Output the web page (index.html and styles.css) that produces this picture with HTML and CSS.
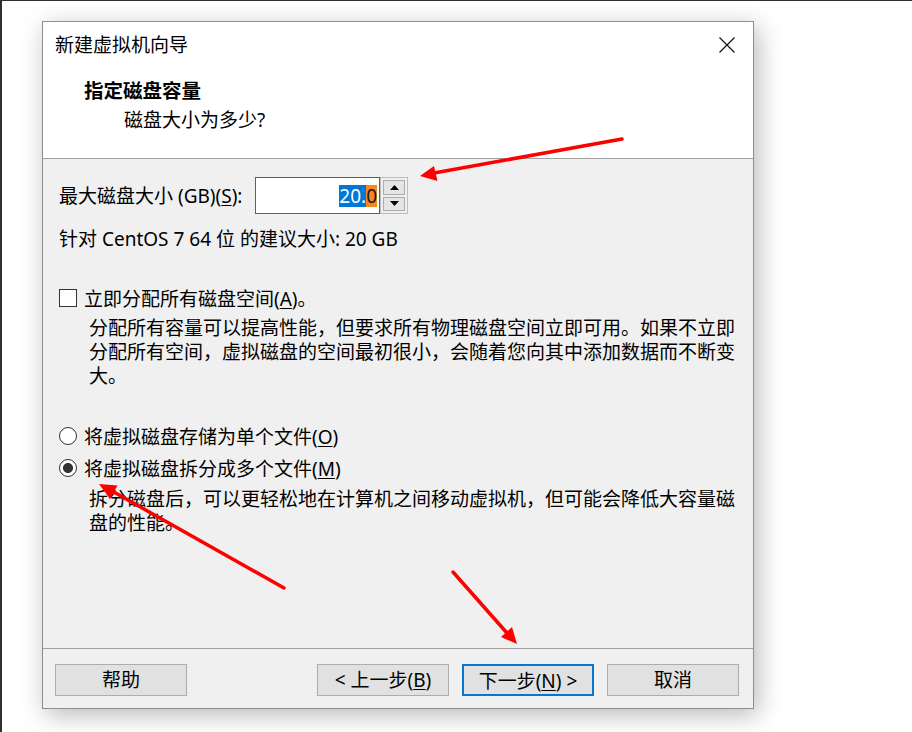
FILE: index.html
```html
<!DOCTYPE html>
<html lang="zh-CN">
<head>
<meta charset="utf-8">
<title>新建虚拟机向导</title>
<link rel="stylesheet" href="styles.css">
</head>
<body>
<div class="screen">
  <div class="dialog">
    <div class="dlg-head">
      <div class="title-row">
        <span class="title">新建虚拟机向导</span>
        <svg class="close" width="16" height="16" viewBox="0 0 16 16" aria-label="关闭"><path d="M0.5 0.5 L15.5 15.5 M15.5 0.5 L0.5 15.5" stroke="#111" stroke-width="1.2" fill="none"/></svg>
      </div>
      <div class="step-title">指定磁盘容量</div>
      <div class="step-sub">磁盘大小为多少?</div>
    </div>
    <div class="dlg-body">
      <div class="size-row">
        <span class="size-label">最大磁盘大小 (GB)(<u>S</u>):</span>
        <div class="spin">
          <div class="spin-input"><span class="sel">20.</span><span class="sel-end">0</span></div>
          <div class="spin-btns">
            <div class="spin-btn"><svg width="9" height="5" viewBox="0 0 9 5"><path d="M0 5 L4.5 0 L9 5 Z" fill="#000"/></svg></div>
            <div class="spin-btn"><svg width="9" height="5" viewBox="0 0 9 5"><path d="M0 0 L4.5 5 L9 0 Z" fill="#000"/></svg></div>
          </div>
        </div>
      </div>
      <div class="hint">针对 CentOS 7 64 位 的建议大小: 20 GB</div>
      <div class="check-row"><span class="checkbox"></span><span>立即分配所有磁盘空间(<u>A</u>)。</span></div>
      <p class="desc">分配所有容量可以提高性能，但要求所有物理磁盘空间立即可用。如果不立即<br>分配所有空间，虚拟磁盘的空间最初很小，会随着您向其中添加数据而不断变<br>大。</p>
      <div class="radio-row first"><span class="radio"></span><span>将虚拟磁盘存储为单个文件(<u>O</u>)</span></div>
      <div class="radio-row"><span class="radio on"></span><span>将虚拟磁盘拆分成多个文件(<u>M</u>)</span></div>
      <p class="desc desc2">拆分磁盘后，可以更轻松地在计算机之间移动虚拟机，但可能会降低大容量磁<br>盘的性能。</p>
    </div>
    <div class="dlg-foot">
      <button class="btn">帮助</button>
      <div class="spacer"></div>
      <button class="btn">&lt; 上一步(<u>B</u>)</button>
      <button class="btn primary">下一步(<u>N</u>) &gt;</button>
      <button class="btn">取消</button>
    </div>
  </div>
</div>
<svg class="arrows" width="912" height="732" viewBox="0 0 912 732">
  <g stroke="#ff0000" stroke-width="3.5" stroke-linecap="round" fill="none">
    <line x1="622" y1="139" x2="434" y2="173"/>
    <line x1="284" y1="588" x2="112" y2="491"/>
    <line x1="453" y1="572" x2="507" y2="633"/>
  </g>
  <g fill="#ff0000">
    <polygon points="420,176 437.5,181 434,166"/>
    <polygon points="99,484 117.5,485.5 110,499"/>
    <polygon points="517,644 501,637 512,627"/>
  </g>
</svg>
</body>
</html>
```
FILE: styles.css
```css
* { box-sizing: border-box; }

html, body {
  margin: 0;
  padding: 0;
}

body {
  position: relative;
  width: 912px;
  height: 732px;
  overflow: hidden;
  background: #ffffff;
  font-family: "Noto Sans", "Noto Sans CJK SC", sans-serif;
  font-size: 19px;
  color: #000;
}

u { text-decoration: underline; text-underline-offset: 2px; text-decoration-thickness: 1px; }

.screen {
  width: 912px;
  height: 732px;
  border-top: 1px solid #2c3035;
  border-left: 2px solid #2c3035;
  padding: 20px 0 0 40px;
}

.dialog {
  width: 712px;
  height: 688px;
  border: 1px solid #8e8e8e;
  background: #f0f0f0;
  display: flex;
  flex-direction: column;
  box-shadow: 4px 6px 24px rgba(0, 0, 0, 0.28);
}

.dlg-head {
  background: #fff;
  height: 137px;
  border-bottom: 1px solid #a0a0a0;
  flex: none;
}

.title-row {
  display: flex;
  align-items: center;
  justify-content: space-between;
  height: 46px;
  padding: 0 18px 0 12px;
  line-height: 24px;
}

.close { display: block; }

.step-title {
  margin-top: 10px;
  padding-left: 41px;
  font-weight: 700;
  font-size: 19.5px;
  line-height: 26px;
}

.step-sub {
  margin-top: 3px;
  padding-left: 81px;
  line-height: 26px;
}

.dlg-body {
  flex: 1;
  padding: 18px 0 0 16px;
}

.size-row {
  display: flex;
  align-items: center;
  height: 37px;
}

.size-label {
  width: 196px;
  flex: none;
  line-height: 24px;
}

.spin {
  display: flex;
  height: 37px;
}

.spin-input {
  width: 125px;
  border: 1px solid #0078d7;
  background: #fff;
  display: flex;
  align-items: center;
  justify-content: flex-end;
  padding-right: 2px;
}

.sel {
  background: #0078d7;
  color: #fff;
  line-height: 22px;
}

.sel-end {
  background: #f5871f;
  color: #1a1a1a;
  line-height: 22px;
}

.spin-btns {
  width: 28px;
  border: 1px solid #bdbdbd;
  background: #f0f0f0;
  padding: 2px;
  display: flex;
  flex-direction: column;
  gap: 2px;
}

.spin-btn {
  flex: 1;
  border: 1px solid #adadad;
  background: #e5e5e5;
  display: flex;
  align-items: center;
  justify-content: center;
}

.hint {
  margin-top: 13px;
  line-height: 24px;
}

.check-row {
  margin-top: 35px;
  display: flex;
  align-items: center;
  height: 24px;
}

.checkbox {
  width: 18px;
  height: 18px;
  border: 1px solid #333;
  background: #fff;
  margin-right: 7px;
  flex: none;
}

.desc {
  margin: 6px 0 0;
  padding-left: 30px;
  line-height: 24px;
  white-space: nowrap;
}

.desc2 { margin-top: 7px; }

.radio-row {
  display: flex;
  align-items: center;
  height: 24px;
  margin-top: 8px;
}

.radio-row.first { margin-top: 36px; }

.radio {
  width: 18px;
  height: 18px;
  border-radius: 50%;
  border: 1px solid #333;
  background: #fff;
  margin-right: 7px;
  flex: none;
}

.radio.on {
  background: radial-gradient(circle, #333 0, #333 4.6px, #fff 5.4px);
}

.dlg-foot {
  flex: none;
  height: 60px;
  border-top: 1px solid #a0a0a0;
  display: flex;
  align-items: flex-start;
  padding: 15px 14px 0 12px;
  gap: 13px;
}

.spacer { flex: 1; }

.btn {
  width: 132px;
  height: 32px;
  border: 1px solid #adadad;
  background: #e1e1e1;
  font: inherit;
  color: #000;
  padding: 0;
  line-height: 30px;
  flex: none;
}

.btn.primary {
  border: 2px solid #0078d7;
}

.arrows {
  position: absolute;
  top: 0;
  left: 0;
  pointer-events: none;
}
```
